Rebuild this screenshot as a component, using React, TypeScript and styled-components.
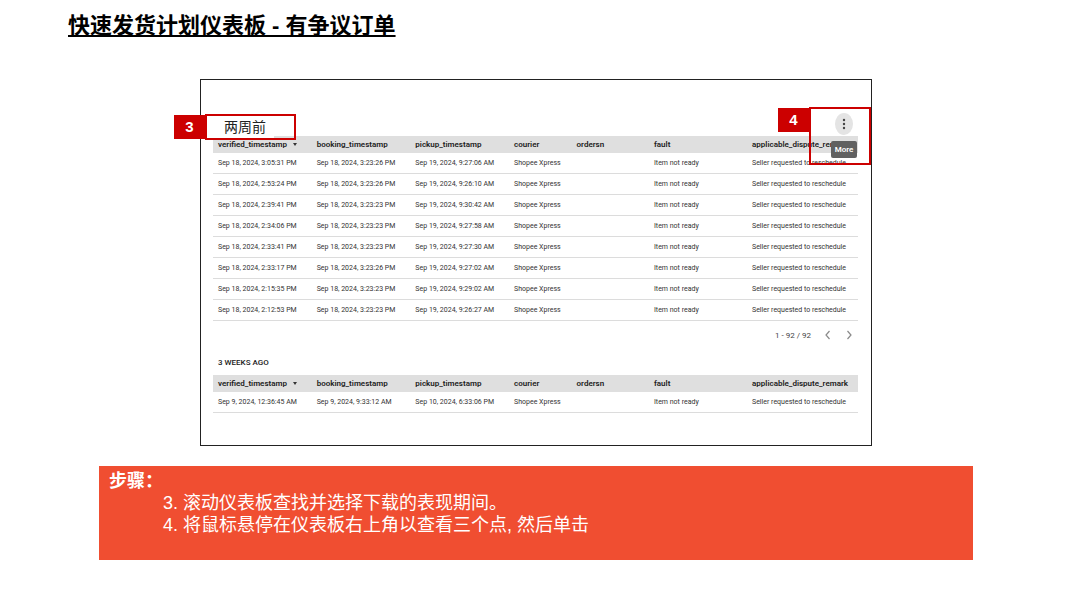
import React from "react";
import styled, { createGlobalStyle } from "styled-components";

const GlobalStyle = createGlobalStyle`
  * { box-sizing: border-box; }
  body {
    margin: 0;
    background: #fff;
    color: #000;
    font-family: "Liberation Sans", "Noto Sans CJK SC", sans-serif;
  }
`;

const RED = "#cc0000";

const Slide = styled.main`
  padding: 10px 96px 38px 99px;
`;

const Title = styled.h1`
  margin: 0 0 37px -31px;
  font-size: 22px;
  line-height: 32px;
  font-weight: 700;
  text-decoration: underline;
  text-decoration-thickness: 2px;
  text-underline-offset: 2px;
  text-decoration-skip-ink: none;
`;

const Panel = styled.section`
  position: relative;
  margin: 0 101px 20px;
  padding: 56px 13px 32px 12px;
  border: 1px solid #222;
  font-family: Roboto, "Noto Sans CJK SC", sans-serif;
`;

const Table = styled.table`
  width: 100%;
  table-layout: fixed;
  border-collapse: separate;
  border-spacing: 0;
  text-align: left;
  white-space: nowrap;
`;

const Col = styled.col<{ $share: number }>`
  width: ${(p) => p.$share}%;
`;

const HeadCell = styled.th`
  height: 17px;
  padding: 0 0 0 5px;
  background: #dfdfdf;
  color: #212121;
  font-size: 8px;
  line-height: 16px;
  font-weight: 600;
`;

const Cell = styled.td`
  height: 21px;
  padding: 0 0 0 5px;
  border-bottom: 1px solid #dcdcdc;
  color: #333;
  font-size: 7px;
  line-height: 16px;
`;

const SortMark = styled.span`
  display: inline-block;
  margin-left: 6px;
  border: 2px solid transparent;
  border-top: 3px solid #333;
  border-bottom: 0;
  vertical-align: middle;
`;

const Pager = styled.nav`
  display: flex;
  justify-content: flex-end;
  align-items: center;
  gap: 13px;
  height: 28px;
  padding-right: 5px;
  color: #444;
  font-size: 8px;
`;

const PagerButton = styled.button`
  display: flex;
  padding: 0;
  border: 0;
  background: none;
  color: #8a8a8a;
`;

const GroupTitle = styled.h2`
  margin: 7px 0 5px 5px;
  color: #212121;
  font-size: 8px;
  line-height: 14px;
  font-weight: 500;
`;

const Callout = styled.div<{ $side: "left" | "right" }>`
  position: absolute;
  display: flex;
  align-items: flex-start;
  ${(p) => (p.$side === "left" ? "top: 34px; left: -27px;" : "top: 27px; right: 0;")}
`;

const Badge = styled.span`
  width: 31px;
  height: 24px;
  margin-top: 1px;
  background: ${RED};
  color: #fff;
  font: 700 15px/24px "Liberation Sans", sans-serif;
  text-align: center;
`;

const PeriodFrame = styled.div`
  width: 91px;
  height: 26px;
  border: 2px solid ${RED};
`;

const PeriodName = styled.h2`
  width: 67px;
  margin: 0;
  padding-left: 17px;
  background: #fff;
  color: #222;
  font-size: 14px;
  line-height: 22px;
  font-weight: 400;
`;

const MenuFrame = styled.div`
  display: flex;
  flex-direction: column;
  align-items: flex-end;
  gap: 6px;
  width: 62px;
  height: 58px;
  padding: 4px 12px 0 0;
  border: 2px solid ${RED};
`;

const MoreButton = styled.button`
  display: flex;
  align-items: center;
  justify-content: center;
  width: 18px;
  height: 22px;
  margin-right: 4px;
  padding: 0;
  border: 0;
  border-radius: 50%;
  background: #e4e4e4;
  color: #444;
`;

const Tooltip = styled.span`
  width: 26px;
  height: 17px;
  border-radius: 2px;
  background: #616161;
  color: #fff;
  font-size: 8px;
  line-height: 17px;
  font-weight: 600;
  text-align: center;
`;

const Steps = styled.section`
  padding: 4px 10px 24px;
  background: #f04e31;
  color: #fff;
  font-size: 18px;
  line-height: 22px;
`;

const StepsTitle = styled.h2`
  margin: 0;
  font-size: 18px;
  line-height: 22px;
  font-weight: 700;
`;

const StepList = styled.ol`
  margin: 0;
  padding: 0 0 0 54px;
  list-style: none;
`;

const columns = [
  { name: "verified_timestamp", share: 15.3 },
  { name: "booking_timestamp", share: 15.3 },
  { name: "pickup_timestamp", share: 15.3 },
  { name: "courier", share: 9.7 },
  { name: "ordersn", share: 12 },
  { name: "fault", share: 15.2 },
  { name: "applicable_dispute_remark", share: 17.2 },
];

type Times = [string, string, string];

const lastWeeks: Times[] = [
  ["Sep 18, 2024, 3:05:31 PM", "Sep 18, 2024, 3:23:26 PM", "Sep 19, 2024, 9:27:06 AM"],
  ["Sep 18, 2024, 2:53:24 PM", "Sep 18, 2024, 3:23:26 PM", "Sep 19, 2024, 9:26:10 AM"],
  ["Sep 18, 2024, 2:39:41 PM", "Sep 18, 2024, 3:23:23 PM", "Sep 19, 2024, 9:30:42 AM"],
  ["Sep 18, 2024, 2:34:06 PM", "Sep 18, 2024, 3:23:23 PM", "Sep 19, 2024, 9:27:58 AM"],
  ["Sep 18, 2024, 2:33:41 PM", "Sep 18, 2024, 3:23:23 PM", "Sep 19, 2024, 9:27:30 AM"],
  ["Sep 18, 2024, 2:33:17 PM", "Sep 18, 2024, 3:23:26 PM", "Sep 19, 2024, 9:27:02 AM"],
  ["Sep 18, 2024, 2:15:35 PM", "Sep 18, 2024, 3:23:23 PM", "Sep 19, 2024, 9:29:02 AM"],
  ["Sep 18, 2024, 2:12:53 PM", "Sep 18, 2024, 3:23:23 PM", "Sep 19, 2024, 9:26:27 AM"],
];

const threeWeeks: Times[] = [
  ["Sep 9, 2024, 12:36:45 AM", "Sep 9, 2024, 9:33:12 AM", "Sep 10, 2024, 6:33:06 PM"],
];

function OrderTable({ rows, label }: { rows: Times[]; label: string }) {
  return (
    <Table aria-label={label}>
      <colgroup>
        {columns.map((c) => (
          <Col key={c.name} $share={c.share} />
        ))}
      </colgroup>
      <thead>
        <tr>
          {columns.map((c, i) => (
            <HeadCell key={c.name} scope="col">
              {c.name}
              {i === 0 && <SortMark />}
            </HeadCell>
          ))}
        </tr>
      </thead>
      <tbody>
        {rows.map((times) => (
          <tr key={times[0]}>
            {times.map((t, i) => (
              <Cell key={i}>{t}</Cell>
            ))}
            <Cell>Shopee Xpress</Cell>
            <Cell />
            <Cell>Item not ready</Cell>
            <Cell>Seller requested to reschedule</Cell>
          </tr>
        ))}
      </tbody>
    </Table>
  );
}

function Chevron({ d }: { d: string }) {
  return (
    <svg width="8" height="10" viewBox="0 0 8 10" fill="none" stroke="currentColor" strokeWidth="1.2">
      <path d={d} />
    </svg>
  );
}

export default function App() {
  return (
    <>
      <GlobalStyle />
      <Slide>
        <Title>快速发货计划仪表板 - 有争议订单</Title>
        <Panel>
          <OrderTable rows={lastWeeks} label="两周前" />
          <Pager>
            <span>1 - 92 / 92</span>
            <PagerButton aria-label="Previous">
              <Chevron d="M5.5 1 2 5l3.500 4" />
            </PagerButton>
            <PagerButton aria-label="Next">
              <Chevron d="M2.500 1 6 5 2.500 9" />
            </PagerButton>
          </Pager>
          <GroupTitle>3 WEEKS AGO</GroupTitle>
          <OrderTable rows={threeWeeks} label="3 weeks ago" />
          <Callout $side="left">
            <Badge>3</Badge>
            <PeriodFrame>
              <PeriodName>两周前</PeriodName>
            </PeriodFrame>
          </Callout>
          <Callout $side="right">
            <Badge>4</Badge>
            <MenuFrame>
              <MoreButton aria-label="More">
                <svg width="4" height="12" viewBox="0 0 4 12" fill="currentColor">
                  <circle cx="2" cy="2" r="1.200" />
                  <circle cx="2" cy="6" r="1.200" />
                  <circle cx="2" cy="10" r="1.200" />
                </svg>
              </MoreButton>
              <Tooltip role="tooltip">More</Tooltip>
            </MenuFrame>
          </Callout>
        </Panel>
        <Steps>
          <StepsTitle>步骤：</StepsTitle>
          <StepList>
            <li>3. 滚动仪表板查找并选择下载的表现期间。</li>
            <li>4. 将鼠标悬停在仪表板右上角以查看三个点, 然后单击</li>
          </StepList>
        </Steps>
      </Slide>
    </>
  );
}
